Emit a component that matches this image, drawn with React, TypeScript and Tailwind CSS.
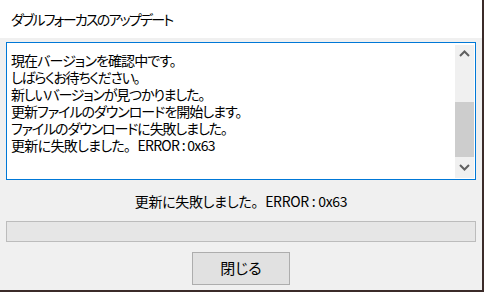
const jp = "font-['Meiryo_UI','Noto_Sans_CJK_JP',sans-serif] [font-feature-settings:'palt']";

const lines: { text: string; cls: string }[] = [
  { text: "現在バージョンを確認中です。", cls: "tracking-[-0.9px]" },
  { text: "しばらくお待ちください。", cls: "tracking-[-1.3px]" },
  { text: "新しいバージョンが見つかりました。", cls: "tracking-[-1.2px]" },
  { text: "更新ファイルのダウンロードを開始します。", cls: "tracking-[-1px]" },
  { text: "ファイルのダウンロードに失敗しました。", cls: "tracking-[-1.1px]" },
];

const Chevron: React.FC<{ up?: boolean }> = ({ up }) => (
  <svg width="11" height="7" viewBox="0 0 11 7">
    <path
      d={up ? "M1 6 L5.5 1.5 L10 6" : "M1 1 L5.5 5.5 L10 1"}
      fill="none"
      stroke="#606060"
      strokeWidth="2"
    />
  </svg>
);

// full-width 。 before the Latin part, like the original
const ErrorText: React.FC = () => (
  <>
    更新に失敗しました<span className="[font-feature-settings:normal]">。</span>ERROR : 0x63
  </>
);

const App: React.FC = () => {
  return (
    <div className="w-[484px] h-[292px] bg-[#3b2b29]">
      <div className={`w-[482px] h-[290px] bg-[#f0f0f0] flex flex-col text-black ${jp}`}>
        <div className="h-[38px] bg-white flex items-center pl-[11px] text-[14px] tracking-[-1.8px]">
          ダブルフォーカスのアップデート
        </div>
        <div className="px-[6px] pt-[4px]">
          <div className="h-[138px] border border-[#0078d7] bg-white flex">
            <div className="flex-1 pl-[4px] pt-[9px] text-[14px] leading-[17px]">
              {lines.map((l) => (
                <div key={l.text} className={l.cls}>
                  {l.text}
                </div>
              ))}
              <div className="tracking-[-0.7px]">
                <ErrorText />
              </div>
            </div>
            <div className="w-[19px] mt-[2px] mb-[1px] mr-[1px] bg-[#f0f0f0] flex flex-col">
              <div className="h-[17px] flex items-center justify-center">
                <Chevron up />
              </div>
              <div className="h-[40px]" />
              <div className="h-[55px] bg-[#cdcdcd]" />
              <div className="flex-1 flex items-center justify-center">
                <Chevron />
              </div>
            </div>
          </div>
        </div>
        <div className="mt-[11px] h-[20px] leading-[20px] text-center text-[14px] tracking-[-0.3px]">
          <ErrorText />
        </div>
        <div className="mt-[10px] mx-[6px] h-[21px] border border-[#bcbcbc] bg-[#e6e6e6]" />
        <div className="mt-[10px] flex justify-center">
          <div className="w-[98px] h-[33px] border border-[#adadad] bg-[#e1e1e1] flex items-center justify-center text-[15px]">
            閉じる
          </div>
        </div>
      </div>
    </div>
  );
};

export default App;
